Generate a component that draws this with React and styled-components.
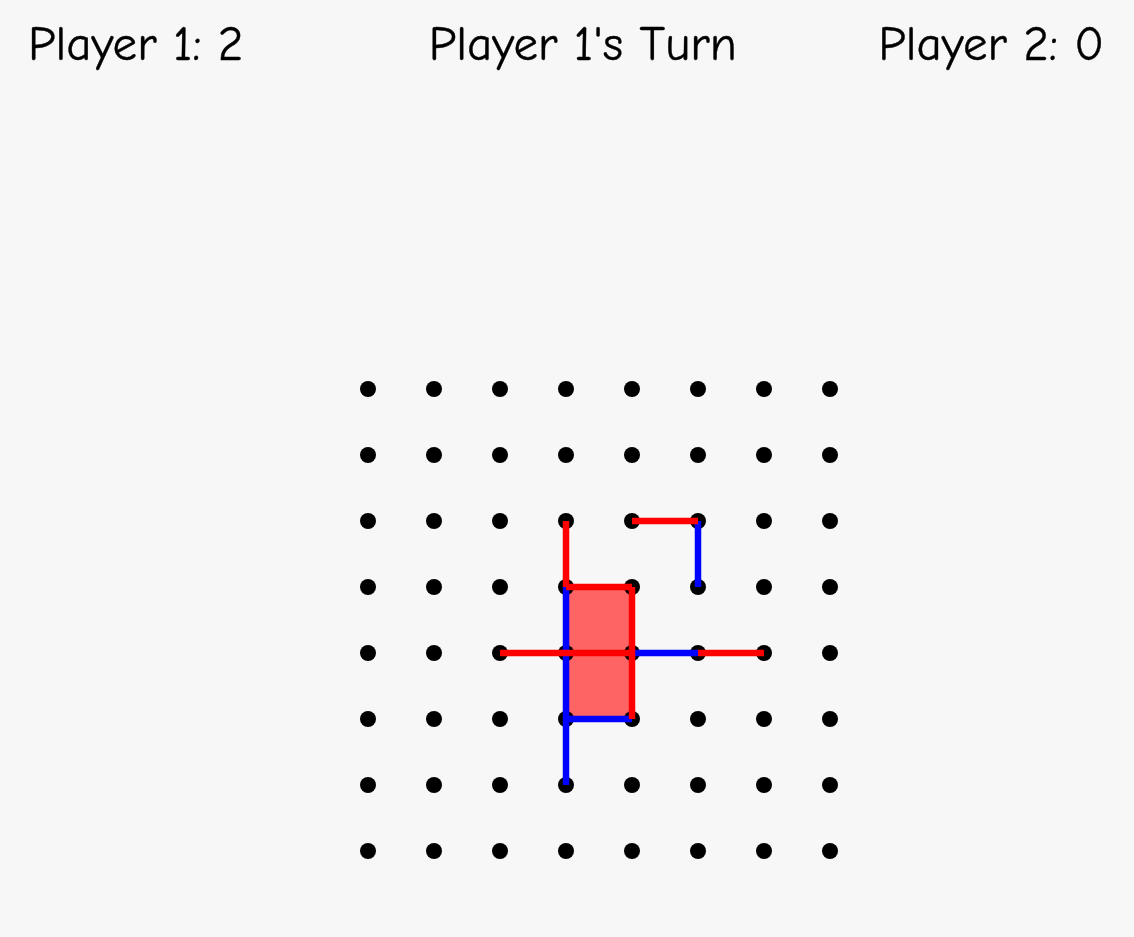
import React from "react";
import styled, { createGlobalStyle } from "styled-components";

const SIZE = 8;
const GAP = 66;
const PAD = 8;

const P1 = "#ff0000";
const P2 = "#0000ff";

// edges: [fromCol, fromRow, toCol, toRow, player]
const edges = [
    [5, 2, 5, 3, 2],
    [3, 3, 3, 4, 2],
    [3, 4, 3, 5, 2],
    [3, 5, 3, 6, 2],
    [3, 5, 4, 5, 2],
    [4, 4, 5, 4, 2],
    [4, 2, 5, 2, 1],
    [3, 2, 3, 3, 1],
    [3, 3, 4, 3, 1],
    [4, 3, 4, 4, 1],
    [4, 4, 4, 5, 1],
    [2, 4, 3, 4, 1],
    [3, 4, 4, 4, 1],
    [5, 4, 6, 4, 1],
];

// boxes: [col, row, player]
const boxes = [
    [3, 3, 1],
    [3, 4, 1],
];

const pos = (n) => PAD + n * GAP;

function App() {
    const dots = [];
    for (let r = 0; r < SIZE; r++) {
        for (let c = 0; c < SIZE; c++) {
            dots.push(<Dot key={`${r}-${c}`} cx={pos(c)} cy={pos(r)} r={8} />);
        }
    }
    const boardSize = PAD * 2 + GAP * (SIZE - 1);

    return (
        <>
            <GlobalStyle />
            <Page>
                <ScoreBar>
                    <Score>Player 1: 2</Score>
                    <Turn>Player 1's Turn</Turn>
                    <Score>Player 2: 0</Score>
                </ScoreBar>
                <BoardArea>
                    <Board
                        width={boardSize}
                        height={boardSize}
                        viewBox={`0 0 ${boardSize} ${boardSize}`}
                    >
                        {boxes.map(([c, r, p]) => (
                            <Box
                                key={`b${c}-${r}`}
                                x={pos(c)}
                                y={pos(r)}
                                width={GAP}
                                height={GAP}
                                $player={p}
                            />
                        ))}
                        {dots}
                        {edges.map(([c1, r1, c2, r2, p], i) => (
                            <Edge
                                key={i}
                                x1={pos(c1)}
                                y1={pos(r1)}
                                x2={pos(c2)}
                                y2={pos(r2)}
                                $player={p}
                            />
                        ))}
                    </Board>
                </BoardArea>
            </Page>
        </>
    );
}

const GlobalStyle = createGlobalStyle`
    body {
        margin: 0;
        background: #f7f7f7;
        font-family: "Comic Sans MS", "Comic Neue", "Liberation Sans", sans-serif;
        color: #000;
    }
`;

const Page = styled.div`
    min-height: 100vh;
    display: flex;
    flex-direction: column;
`;

const ScoreBar = styled.div`
    display: flex;
    justify-content: space-between;
    align-items: center;
    padding: 18px 30px 0 28px;
    font-size: 49px;
    line-height: 52px;
    -webkit-text-stroke: 0.4px #000;
`;

const Score = styled.div``;

const Turn = styled.div`
    margin-left: 44px;
`;

const BoardArea = styled.div`
    display: flex;
    justify-content: center;
    padding: 311px 0 0 63px;
`;

const Board = styled.svg`
    display: block;
`;

const Dot = styled.circle`
    fill: #000;
`;

const Edge = styled.line`
    stroke: ${(p) => (p.$player === 1 ? P1 : P2)};
    stroke-width: 6.5;
    stroke-linecap: butt;
`;

const Box = styled.rect`
    fill: ${(p) => (p.$player === 1 ? "#ff6464" : "#6464ff")};
`;

export default App;
